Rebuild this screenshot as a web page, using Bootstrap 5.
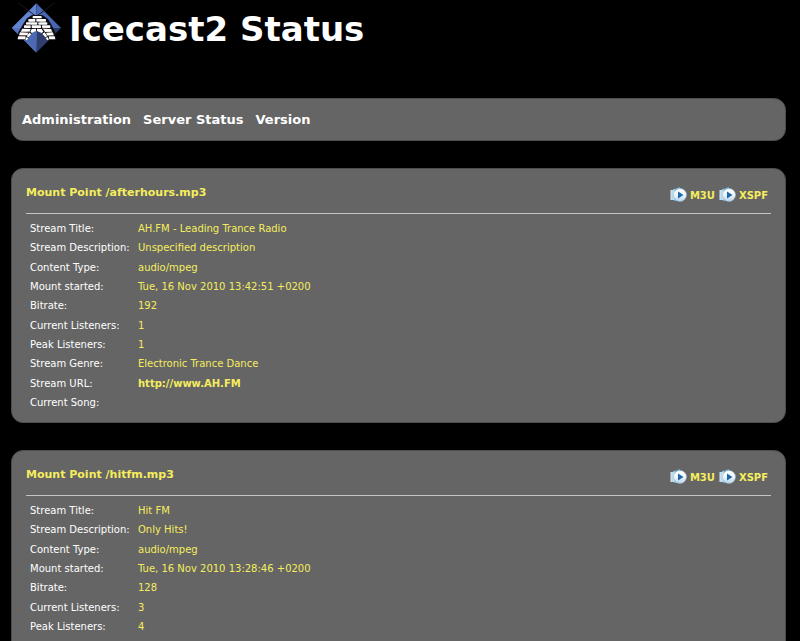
<!DOCTYPE html>
<html lang="en">
<head>
<meta charset="utf-8">
<meta name="viewport" content="width=device-width, initial-scale=1">
<title>Icecast2 Status</title>
<link rel="stylesheet" href="https://cdn.jsdelivr.net/npm/bootstrap@5.3.0/dist/css/bootstrap.min.css">
<style>
body { background: #000; color: #fff; font-family: Verdana, "DejaVu Sans", sans-serif; font-size: 10px; line-height: 15px; }
.page { padding: 2px 14px 0 11px; }
.brand-row { height: 52px; gap: 7px; }
.brand-row h1 { font-size: 34px; line-height: 48px; padding-top: 2px; }
.panel { background: #656565; border: 1px solid #4d4d4d; border-radius: 12px; }
.menu { margin-top: 44px; height: 43px; padding: 0 10px; gap: 12px; font-size: 13px; }
.mount { margin-top: 27px; padding: 12px 14px 10px; }
.mount-head { height: 33px; padding-bottom: 8px; border-bottom: 1px solid #c4c4c4; }
.mount-head h2 { font-size: 11px; line-height: 24px; }
.mount-head a { font-size: 10px; gap: 3px; padding-top: 4px; }
.players { gap: 4px; padding-right: 3px; }
.yellow { color: #f5ed5d; }
.stats { margin-top: 5px; height: 193px; }
.stats th { width: 108px; padding: 0 4px; font-weight: 400; }
.stats td { padding: 0 4px; }
</style>
</head>
<body>
<svg width="0" height="0" class="position-absolute" aria-hidden="true">
  <defs>
    <linearGradient id="disc" x1="0" y1="0" x2="0" y2="1"><stop offset="0" stop-color="#fff"/><stop offset=".5" stop-color="#f0f7fc"/><stop offset="1" stop-color="#b5d3ea"/></linearGradient>
    <symbol id="play" viewBox="0 0 17 17">
      <path d="M1 3h3v10H1z" fill="#b4d9ec"/><path d="M4 2l6-2v14H4z" fill="#62add9"/><path d="M1 3v10M4 2v11" stroke="#dcebf3"/>
      <circle cx="10" cy="8" r="6.500" fill="url(#disc)" stroke="#9fb4c4" stroke-width=".5"/>
      <path d="M8 4.500l5.500 3.500L8 11.500z" fill="#1d68ab"/>
    </symbol>
  </defs>
</svg>
<main class="page">
  <header class="brand-row d-flex align-items-center">
    <svg width="51" height="52" viewBox="-3 0 153 156" role="img" aria-label="Icecast">
      <path d="M73 4L-1 78h74z" fill="#6284d0"/><path d="M73 4l74 74H73z" fill="#4766b4"/><path d="M-1 78h74v74z" fill="#5573bd"/><path d="M147 78l-74 74V78z" fill="#293967"/>
      <path d="M18 2l58 44M128 2L68 47" stroke="#17171e" stroke-width="3" fill="none"/>
      <path d="M15 113l4-22 13-23 13-19 15-10h31l17 12 12 20 10 21 4 21h-29l-11-17-19-13-18 13-11 17z" fill="#0e0c11"/>
      <path d="M75 86l20 14 10 14-32 34-29-34 12-14z" fill="#4c69b1"/><path d="M75 86l20 14 10 14-32 34z" fill="#303e6d"/>
      <g fill="#fff">
        <rect x="62" y="42" width="27" height="7" rx="2"/>
        <rect x="49" y="51" width="21" height="8" rx="2"/><rect x="73" y="51" width="29" height="8" rx="2"/>
        <rect x="42" y="61" width="34" height="7" rx="2"/><rect x="79" y="61" width="27" height="7" rx="2"/>
        <rect x="36" y="70" width="20" height="8" rx="2"/><rect x="59" y="70" width="28" height="8" rx="2"/><rect x="90" y="70" width="25" height="8" rx="2"/>
        <path d="M31 80l25 1-3 8H26zM59 81l13-1v7l-12 6-5-3zM75 80l14 1 5 8-5 4-14-6zM93 80l24 1 4 8-22 1z"/>
        <path d="M24 91l25 1-3 8H21zM52 92l6 4-8 10-6-3zM91 95l7-4 8 12-6 3zM102 92l20-1 4 9-20 1z"/>
        <path d="M19 103h22l-1 9H17zM44 105l5 3-4 6-5-1zM101 108l5-3 5 7-5 3zM110 103h18l2 9h-18z"/>
      </g>
      <path d="M45 90h9M43 69h14M90 79h14M104 101h13M23 101h19M75 60h9" stroke="#886457" stroke-width="2" fill="none"/>
    </svg>
    <h1 class="fw-bold mb-0 text-nowrap">Icecast2 Status</h1>
  </header>
  <nav class="panel menu d-flex align-items-center fw-bold" aria-label="Main">
    <a href="#" class="text-white text-decoration-none">Administration</a>
    <a href="#" class="text-white text-decoration-none">Server Status</a>
    <a href="#" class="text-white text-decoration-none">Version</a>
  </nav>
  <section class="panel mount">
    <div class="mount-head d-flex justify-content-between">
      <h2 class="yellow fw-bold mb-0">Mount Point /afterhours.mp3</h2>
      <div class="players d-flex fw-bold">
        <a href="#" class="yellow text-decoration-none d-flex align-items-center"><svg width="17" height="17" aria-hidden="true"><use href="#play"/></svg>M3U</a>
        <a href="#" class="yellow text-decoration-none d-flex align-items-center"><svg width="17" height="17" aria-hidden="true"><use href="#play"/></svg>XSPF</a>
      </div>
    </div>
    <table class="stats w-100">
      <tbody>
      <tr><th scope="row" class="text-nowrap">Stream Title:</th><td class="yellow">AH.FM - Leading Trance Radio</td></tr>
      <tr><th scope="row" class="text-nowrap">Stream Description:</th><td class="yellow">Unspecified description</td></tr>
      <tr><th scope="row" class="text-nowrap">Content Type:</th><td class="yellow">audio/mpeg</td></tr>
      <tr><th scope="row" class="text-nowrap">Mount started:</th><td class="yellow">Tue, 16 Nov 2010 13:42:51 +0200</td></tr>
      <tr><th scope="row" class="text-nowrap">Bitrate:</th><td class="yellow">192</td></tr>
      <tr><th scope="row" class="text-nowrap">Current Listeners:</th><td class="yellow">1</td></tr>
      <tr><th scope="row" class="text-nowrap">Peak Listeners:</th><td class="yellow">1</td></tr>
      <tr><th scope="row" class="text-nowrap">Stream Genre:</th><td class="yellow">Electronic Trance Dance</td></tr>
      <tr><th scope="row" class="text-nowrap">Stream URL:</th><td><a href="#" class="yellow fw-bold text-decoration-none">http://www.AH.FM</a></td></tr>
      <tr><th scope="row" class="text-nowrap">Current Song:</th><td></td></tr>
      </tbody>
    </table>
  </section>
  <section class="panel mount">
    <div class="mount-head d-flex justify-content-between">
      <h2 class="yellow fw-bold mb-0">Mount Point /hitfm.mp3</h2>
      <div class="players d-flex fw-bold">
        <a href="#" class="yellow text-decoration-none d-flex align-items-center"><svg width="17" height="17" aria-hidden="true"><use href="#play"/></svg>M3U</a>
        <a href="#" class="yellow text-decoration-none d-flex align-items-center"><svg width="17" height="17" aria-hidden="true"><use href="#play"/></svg>XSPF</a>
      </div>
    </div>
    <table class="stats w-100">
      <tbody>
      <tr><th scope="row" class="text-nowrap">Stream Title:</th><td class="yellow">Hit FM</td></tr>
      <tr><th scope="row" class="text-nowrap">Stream Description:</th><td class="yellow">Only Hits!</td></tr>
      <tr><th scope="row" class="text-nowrap">Content Type:</th><td class="yellow">audio/mpeg</td></tr>
      <tr><th scope="row" class="text-nowrap">Mount started:</th><td class="yellow">Tue, 16 Nov 2010 13:28:46 +0200</td></tr>
      <tr><th scope="row" class="text-nowrap">Bitrate:</th><td class="yellow">128</td></tr>
      <tr><th scope="row" class="text-nowrap">Current Listeners:</th><td class="yellow">3</td></tr>
      <tr><th scope="row" class="text-nowrap">Peak Listeners:</th><td class="yellow">4</td></tr>
      <tr><th scope="row" class="text-nowrap">Stream Genre:</th><td class="yellow">various</td></tr>
      <tr><th scope="row" class="text-nowrap">Stream URL:</th><td></td></tr>
      <tr><th scope="row" class="text-nowrap">Current Song:</th><td></td></tr>
      </tbody>
    </table>
  </section>
</main>
<script src="https://cdn.jsdelivr.net/npm/bootstrap@5.3.0/dist/js/bootstrap.bundle.min.js"></script>
</body>
</html>
